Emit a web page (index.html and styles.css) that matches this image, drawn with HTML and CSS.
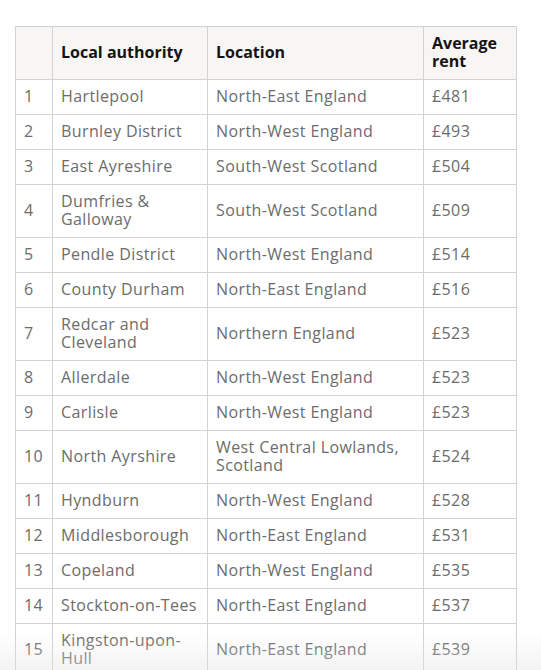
FILE: index.html
```html
<!DOCTYPE html>
<html lang="en">
<head>
<meta charset="utf-8">
<title>Cheapest rents</title>
<link rel="stylesheet" href="styles.css">
</head>
<body>
<div class="page">
  <table class="rent-table">
    <colgroup>
      <col class="c-rank">
      <col class="c-auth">
      <col class="c-loc">
      <col class="c-rent">
    </colgroup>
    <thead>
      <tr><th></th><th>Local authority</th><th>Location</th><th>Average rent</th></tr>
    </thead>
    <tbody>
      <tr><td>1</td><td>Hartlepool</td><td>North-East England</td><td>£481</td></tr>
      <tr><td>2</td><td>Burnley District</td><td>North-West England</td><td>£493</td></tr>
      <tr><td>3</td><td>East Ayreshire</td><td>South-West Scotland</td><td>£504</td></tr>
      <tr><td>4</td><td>Dumfries &amp; Galloway</td><td>South-West Scotland</td><td>£509</td></tr>
      <tr><td>5</td><td>Pendle District</td><td>North-West England</td><td>£514</td></tr>
      <tr><td>6</td><td>County Durham</td><td>North-East England</td><td>£516</td></tr>
      <tr><td>7</td><td>Redcar and Cleveland</td><td>Northern England</td><td>£523</td></tr>
      <tr><td>8</td><td>Allerdale</td><td>North-West England</td><td>£523</td></tr>
      <tr><td>9</td><td>Carlisle</td><td>North-West England</td><td>£523</td></tr>
      <tr><td>10</td><td>North Ayrshire</td><td>West Central Lowlands, Scotland</td><td>£524</td></tr>
      <tr><td>11</td><td>Hyndburn</td><td>North-West England</td><td>£528</td></tr>
      <tr><td>12</td><td>Middlesborough</td><td>North-East England</td><td>£531</td></tr>
      <tr><td>13</td><td>Copeland</td><td>North-West England</td><td>£535</td></tr>
      <tr><td>14</td><td>Stockton-on-Tees</td><td>North-East England</td><td>£537</td></tr>
      <tr><td>15</td><td>Kingston-upon-Hull</td><td>North-East England</td><td>£539</td></tr>
    </tbody>
  </table>
  <div class="fade"></div>
</div>
</body>
</html>
```
FILE: styles.css
```css
html, body {
  margin: 0;
  padding: 0;
  background: #ffffff;
}
body {
  font-family: "Open Sans", "Liberation Sans", sans-serif;
  overflow: hidden;
  height: 670px;
}
.page {
  position: relative;
  height: 670px;
  padding: 26px 0 0 15px;
  box-sizing: border-box;
  overflow: hidden;
}
.rent-table {
  border-collapse: collapse;
  table-layout: fixed;
  width: 501px;
  font-size: 16px;
  line-height: 18px;
  color: #6c6c6c;
}
.c-rank { width: 37px; }
.c-auth { width: 155px; }
.c-loc { width: 216px; }
.c-rent { width: 93px; }
.rent-table th,
.rent-table td {
  border: 1px solid #d2d2d2;
  padding: 7px 8px 9px;
  text-align: left;
  vertical-align: middle;
}
.rent-table td {
  letter-spacing: 0.4px;
}
.rent-table th {
  background: #f7f6f4;
  color: #141414;
  font-weight: 700;
}
.fade {
  position: absolute;
  left: 0;
  right: 0;
  bottom: 0;
  height: 36px;
  background: linear-gradient(to bottom, rgba(230,230,230,0), rgba(228,228,228,0.45));
  pointer-events: none;
}
```
